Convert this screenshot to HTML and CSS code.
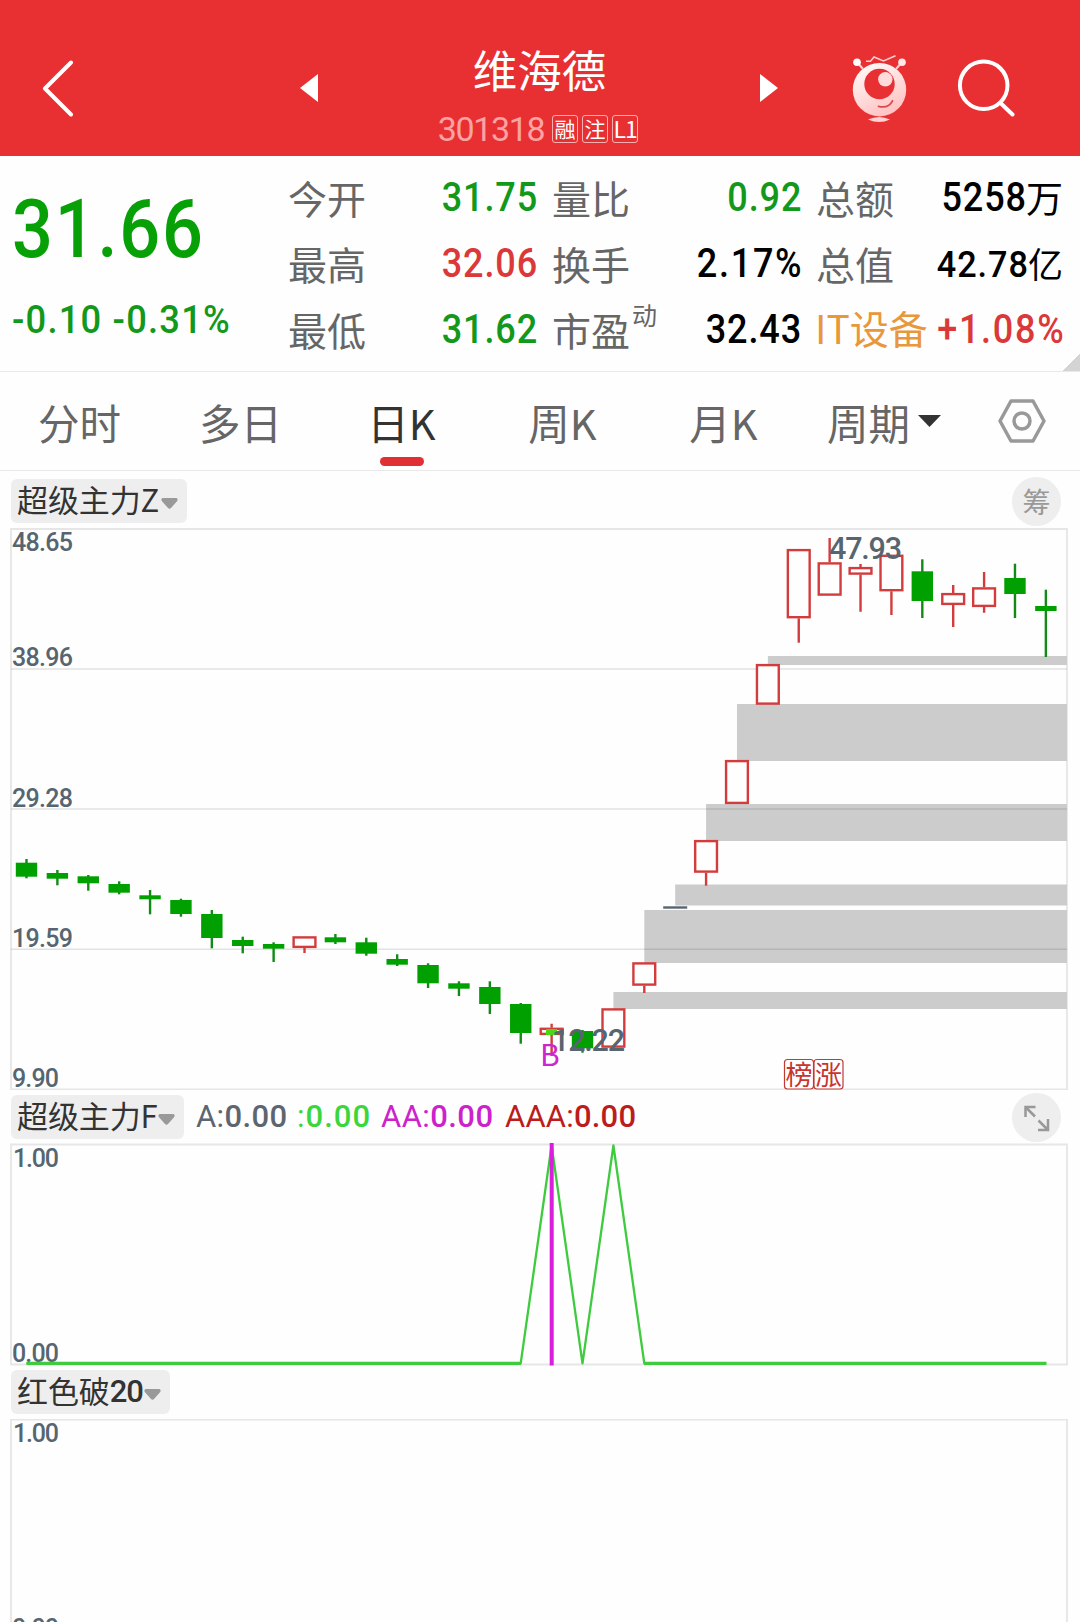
FILE: index.html
```html
<!DOCTYPE html>
<html lang="zh-CN">
<head>
<meta charset="utf-8">
<title>维海德 301318</title>
<link rel="stylesheet" href="styles.css">
</head>
<body>
<header class="header">
  <svg class="back" width="32" height="58" viewBox="42 60 32 58"><path d="M71 62.500 45 88.500 71 114.500"/></svg>
  <svg class="prev" width="18" height="28" viewBox="0 0 18 28"><path d="M18 0V28L0 14z"/></svg>
  <div class="title">
    <h1>维海德</h1>
    <div class="sub"><span class="code">301318</span><span class="tag">融</span><span class="tag">注</span><span class="tag tag-l">L1</span></div>
  </div>
  <svg class="next" width="18" height="28" viewBox="0 0 18 28"><path d="M0 0V28L18 14z"/></svg>
  <svg class="robot" width="58" height="72" viewBox="850 53 58 72">
    <defs><linearGradient id="skin" x1="0" y1="0" x2=".5" y2="1"><stop offset="0" stop-color="#fff"/><stop offset="1" stop-color="#ffc4c4"/></linearGradient></defs>
    <path class="hair" d="M866 61.200h4.500l3.500-4.200 9.500 4 12-5.300"/>
    <path class="stalk" d="M857 62l6 7M902 62l-6 7"/>
    <circle cx="857" cy="62.300" r="3.800" fill="#fff"/><circle cx="902" cy="62.300" r="3.800" fill="#ffe8e8"/>
    <circle cx="879.500" cy="89.700" r="26.700" fill="url(#skin)"/>
    <circle cx="879.500" cy="84" r="15.200" fill="#e83032"/>
    <circle cx="885.300" cy="79.300" r="7.200" fill="#ffdada"/>
    <path class="smile" d="M878.500 106.300q10 2.500 14-5.500"/>
    <path d="M868 119.500q11-5 22 0-11 5-22 0z" fill="#ffd0d0"/>
  </svg>
  <svg class="search" width="58" height="58" viewBox="957 59 58 58"><circle cx="983.700" cy="85.300" r="23.800"/><path d="M1000.500 103l12 11.500"/></svg>
</header>

<section class="quote">
  <div class="price">
    <div class="last"><span class="num">31.66</span></div>
    <div class="change"><span class="num">-0.10 -0.31%</span></div>
  </div>
  <dl class="stats">
    <dt>今开</dt><dd class="down"><span class="num">31.75</span></dd>
    <dt>量比</dt><dd class="down"><span class="num">0.92</span></dd>
    <dt>总额</dt><dd><span class="num">5258</span><span class="unit">万</span></dd>
    <dt>最高</dt><dd class="up"><span class="num">32.06</span></dd>
    <dt>换手</dt><dd><span class="num pct">2.17%</span></dd>
    <dt>总值</dt><dd class="small"><span class="num">42.78</span><span class="unit">亿</span></dd>
    <dt>最低</dt><dd class="down"><span class="num">31.62</span></dd>
    <dt>市盈<sup>动</sup></dt><dd><span class="num">32.43</span></dd>
    <dt class="sector">IT设备</dt><dd class="up"><span class="num pct">+1.08%</span></dd>
  </dl>
  <i class="corner"></i>
</section>

<nav class="tabs">
  <a>分时</a><a>多日</a><a class="active">日K</a><a>周K</a><a>月K</a>
  <a class="period">周期<svg width="23" height="12" viewBox="0 0 23 12"><path d="M0 0H23L11.500 12z" fill="#333"/></svg></a>
  <svg class="settings" width="50" height="46" viewBox="0 0 50 46"><path d="M14 3h22L47 23l-11 20h-22L3 23z"/><circle cx="25" cy="23" r="8"/></svg>
</nav>

<div class="bar bar-first">
  <button class="chip">超级主力Z<svg width="17" height="11" viewBox="0 0 17 11"><path d="M1.500 0h14q2 1.500 .5 3.200L10 10q-1.500 1.500-3 0L1 3.200Q-.5 1.500 1.500 0z"/></svg></button>
  <button class="round">筹</button>
</div>
<svg class="chart" id="kline" width="1080" height="562" viewBox="0 528 1080 562">
  <g class="frame"><path d="M11 529H1067V1089.500H11z"/></g>
  <g id="gaps"></g>
  <path class="grid" d="M11 669H1067M11 809H1067M11 949.300H1067"/>
  <g id="candles"></g>
  <rect x="546" y="1029" width="11" height="6" fill="#4cd810"/>
  <g class="axis">
    <text x="12" y="551" textLength="61">48.65</text>
    <text x="12" y="666" textLength="61">38.96</text>
    <text x="12" y="807" textLength="61">29.28</text>
    <text x="12" y="947" textLength="61">19.59</text>
    <text x="12" y="1087" textLength="47">9.90</text>
  </g>
  <text class="signal" x="540" y="1066">B</text>
  <g class="extreme">
    <text x="829" y="559" textLength="73">47.93</text>
    <text x="552" y="1051" textLength="73">12.22</text>
  </g>
  <g class="mark">
    <rect x="784.500" y="1059.500" width="29" height="29.500" rx="3"/><rect x="814" y="1059.500" width="29" height="29.500" rx="3"/>
    <text x="785.500" y="1084.500">榜</text><text x="815" y="1084.500">涨</text>
  </g>
</svg>

<div class="bar bar-second">
  <button class="chip">超级主力F<svg width="17" height="11" viewBox="0 0 17 11"><path d="M1.500 0h14q2 1.500 .5 3.200L10 10q-1.500 1.500-3 0L1 3.200Q-.5 1.500 1.500 0z"/></svg></button>
  <svg class="legend" width="460" height="44" viewBox="190 1095 460 44">
    <text x="196" y="1127" textLength="91" fill="#5d6670">A:<tspan>0.00</tspan></text>
    <text x="297" y="1127" textLength="73" fill="#3bd63b">:<tspan>0.00</tspan></text>
    <text x="381" y="1127" textLength="112" fill="#cc22cc">AA:<tspan>0.00</tspan></text>
    <text x="505" y="1127" textLength="131" fill="#bc1c1c">AAA:<tspan>0.00</tspan></text>
  </svg>
  <button class="round"><svg width="30" height="30" viewBox="1022 1102 30 30"><path d="M1025.500 1116V1106H1035.500M1026 1106.500 1035 1115.500M1048 1118V1129H1038M1047.500 1128.500 1038.500 1119.500"/></svg></button>
</div>
<svg class="chart" width="1080" height="223" viewBox="0 1143 1080 223">
  <g class="frame"><path d="M11 1144.500H1067V1364.500H11z"/></g>
  <g class="axis"><text x="13" y="1167" textLength="46">1.00</text><text x="12" y="1361.500" textLength="47">0.00</text></g>
  <path class="line" d="M26.500 1363.300H520.700L551.600 1145.500 582.500 1363.300 613.400 1145.500 644.300 1363.300H1046"/>
  <path class="line base" d="M26.500 1363.300H521M644 1363.300H1046.500"/>
  <path d="M551.700 1143V1365.500" stroke="#d81fdc" stroke-width="4"/>
</svg>

<div class="bar bar-third">
  <button class="chip">红色破<b>20</b><svg width="17" height="11" viewBox="0 0 17 11"><path d="M1.500 0h14q2 1.500 .5 3.200L10 10q-1.500 1.500-3 0L1 3.200Q-.5 1.500 1.500 0z"/></svg></button>
</div>
<svg class="chart" width="1080" height="203" viewBox="0 1419 1080 203">
  <g class="frame"><path d="M11 1640V1419.700H1067V1640"/></g>
  <g class="axis"><text x="13" y="1442" textLength="46">1.00</text><text x="12" y="1637" textLength="47">0.00</text></g>
</svg>
<script src="chart.js"></script>
</body>
</html>
```
FILE: styles.css
```css
* { box-sizing: border-box; margin: 0; padding: 0; }
body { width: 1080px; height: 1622px; overflow: hidden; background: #fefefe; color: #000; font-family: "Noto Sans CJK SC", sans-serif; }
svg { display: block; flex: none; }
button { border: 0; font: inherit; }

.header { height: 156px; background: #e83032; display: flex; align-items: flex-start; }
.header > svg { fill: #fff; }
.header .back { margin: 60px 0 0 42px; fill: none; stroke: #fff; stroke-width: 4; stroke-linecap: round; stroke-linejoin: round; }
.header .prev { margin: 74px 0 0 226px; }
.header .next { margin: 74px 0 0; }
.header .robot { margin: 53px 0 0 72px; }
.header .search { margin: 59px 0 0 49px; fill: none; stroke: #fff; stroke-width: 4; stroke-linecap: round; }
.robot .hair, .robot .stalk { fill: none; stroke: #ffd0d0; stroke-width: 1.5; }
.robot .stalk { stroke-width: 2; }
.robot .smile { fill: none; stroke: #d94a4c; stroke-width: 1.8; stroke-linecap: round; }
.title { width: 442px; padding: 42px 0 0 1px; display: flex; flex-direction: column; align-items: center; color: #fff; }
.title h1 { font-size: 44.500px; line-height: 54px; font-weight: 400; }
.sub { display: flex; align-items: center; height: 28px; margin: 19px 3px 0 0; gap: 3.500px; }
.code { font: 400 34px/28px Roboto, sans-serif; color: #f9a3a3; letter-spacing: -1.350px; margin-right: 4px; }
.tag { width: 26.500px; height: 28px; border: 1.500px solid #f9b0b0; border-radius: 3px; font-size: 21px; line-height: 25px; display: flex; justify-content: center; }
.tag-l { font-size: 23px; letter-spacing: -1px; }

.quote { position: relative; height: 216px; border-bottom: 1.500px solid #e8e8e8; display: flex; }
.num { display: inline-block; font-family: Roboto, sans-serif; font-weight: 500; letter-spacing: 1px; margin-right: -1px; transform: scaleX(.9); transform-origin: right; }
.num.pct { letter-spacing: 1.900px; margin-right: -2px; }
.price { width: 288px; padding-left: 12px; color: #07a007; }
.price .num { transform-origin: left; white-space: nowrap; }
.last { font-size: 81px; line-height: 80px; margin-top: 26px; }
.last .num { transform: scaleX(.89); letter-spacing: 2px; }
.change { font-size: 39.500px; line-height: 44px; margin-top: 24px; color: #12981a; }
.change .num { transform: scaleX(.92); letter-spacing: 1.300px; }
.stats { display: grid; grid-template-columns: 130px 119px 15px 110px 139px 15px 110px 137px; grid-auto-rows: 66px; padding-top: 9px; }
.stats dt { font-size: 39px; line-height: 65px; color: #666; white-space: nowrap; }
.stats dd { font-size: 40px; line-height: 66px; display: flex; justify-content: flex-end; white-space: nowrap; }
.stats dt:nth-of-type(3n+1) { grid-column: 1; }
.stats dt:nth-of-type(3n+2) { grid-column: 4; }
.stats dt:nth-of-type(3n) { grid-column: 7; }
.stats sup { font-size: 25px; line-height: 1; vertical-align: 21px; margin-left: 2px; }
.stats .sector { color: #e8973c; line-height: 60px; margin-left: -1px; }
.unit { font-size: 37px; line-height: 64px; }
.small .num { font-size: 36px; line-height: 69px; transform: scaleX(.95); }
.small .unit { font-size: 35px; line-height: 64px; }
.down { color: #12981a; }
.up { color: #db3939; }
.corner { position: absolute; right: 0; bottom: 0; width: 17px; height: 17px; background: linear-gradient(135deg, transparent 50%, #d4d4d4 50%); }

.tabs { height: 99px; border-bottom: 1.500px solid #e8e8e8; display: flex; }
.tabs a { position: relative; width: 161px; padding-right: 2px; text-align: center; font-size: 41.500px; line-height: 101px; color: #666; }
.tabs a.active { color: #333; }
.tabs a.active::after { content: ""; position: absolute; left: 58px; bottom: 4px; width: 44px; height: 9px; border-radius: 5px; background: #e03033; }
.tabs .period { width: 137px; margin-left: 22px; padding: 0; text-align: left; display: flex; gap: 8px; }
.period svg { margin-top: 43px; }
.settings { margin: 26px 0 0 33px; fill: none; stroke: #999; stroke-width: 3.500; stroke-linejoin: round; }

.bar { display: flex; align-items: flex-start; padding: 0 19px 0 11px; }
.bar-first { height: 57px; padding-top: 8px; }
.bar-second { height: 53px; padding-top: 5px; }
.bar-third { height: 53px; padding-top: 4px; }
.chip { height: 44px; padding: 0 9px 0 6px; border-radius: 6px; background: #eee; color: #333; font-size: 31px; line-height: 39px; display: flex; letter-spacing: -.100px; gap: 2px; white-space: nowrap; }
.bar-second .chip { width: 173px; gap: 0; }
.bar-third .chip { width: 159px; gap: 1px; }
.chip b { font: 500 31px/43px Roboto, sans-serif; letter-spacing: -1px; margin-left: -1px; }
.chip svg { fill: #999; margin-top: 19px; }
.round { width: 49px; height: 49px; margin: -2px 0 0 auto; border-radius: 50%; background: #eee; color: #999; font-size: 28px; line-height: 51px; display: flex; align-items: center; justify-content: center; }
.round svg { fill: none; stroke: #999; stroke-width: 2.500; }
.legend { margin-left: 6px; font: 400 31px Roboto, sans-serif; }
.legend tspan { font-weight: 500; }

.frame path { fill: none; stroke: #e6e6e6; stroke-width: 1.800; }
.grid { stroke: rgba(0, 0, 0, .11); stroke-width: 1.500; }
.axis { font: 500 25px Roboto, sans-serif; fill: #566570; }
.extreme { font: 500 30.500px Roboto, sans-serif; fill: #566570; }
text { white-space: pre; }
.signal { font-size: 30px; fill: #cf25cf; }
.mark rect { fill: #fff; stroke: #c03a36; stroke-width: 1.200; }
.mark text { font-size: 27px; fill: #c8342f; }
.line { fill: none; stroke: #3ecb3e; stroke-width: 2.300; stroke-linejoin: round; }
.line.base { stroke-width: 3.200; }
.rise rect { fill: #fefefe; stroke: #d23c3c; stroke-width: 2.400; }
.rise path { stroke: #d23c3c; stroke-width: 2.400; }
.fall rect { fill: #00a000; }
.fall path { stroke: #118a16; stroke-width: 2.400; }
.flat path { stroke: #566570; stroke-width: 2.400; }
```
FILE: chart.js
```js
// Each row: kind, body top, body bottom, wick top, wick bottom
const rows = [
  ['fall', 862.7, 876.7, 859, 878.3], ['fall', 873, 878.7, 870, 885.3], ['fall', 876.3, 883.3, 875, 890.7],
  ['fall', 884, 892.7, 881.3, 894.3], ['fall', 895.3, 899.3, 890, 914.3], ['fall', 900, 914, 898.7, 916.7],
  ['fall', 914, 938, 910, 948.3], ['fall', 940, 946, 936.7, 953.3], ['fall', 944, 948.7, 942.3, 962],
  ['rise', 936.3, 948, 936.3, 953], ['fall', 937.3, 942.3, 934, 944], ['fall', 942.3, 953.7, 937.7, 955.7],
  ['fall', 959, 964.7, 954.3, 966], ['fall', 965, 983.3, 963.3, 988], ['fall', 983.3, 988.7, 981.3, 996],
  ['fall', 987, 1004, 981.3, 1014], ['fall', 1004, 1033, 1003, 1043.7], ['rise', 1027.7, 1035, 1023.7, 1056],
  ['fall', 1031, 1048.3, 1030, 1052.7], ['rise', 1008.3, 1047.7, 1008.3, 1047.7], ['rise', 962.3, 985.7, 962.3, 993],
  ['flat', 907.5, 907.5, 0, 0], ['rise', 840, 872.7, 840, 885.7], ['rise', 760, 804, 760, 804],
  ['rise', 664, 704.7, 664, 704.7], ['rise', 549, 618.3, 549, 642.7], ['rise', 562.3, 595.7, 538, 595.7],
  ['rise', 567, 574.7, 564, 611.7], ['rise', 554.7, 591.3, 554.7, 615], ['fall', 571.3, 601, 559.3, 618],
  ['rise', 593, 605, 585, 627], ['rise', 587.3, 607, 572, 612.7], ['fall', 578, 594, 563.7, 618],
  ['fall', 606, 611, 589.7, 657]
];
// Price gaps: candle index, top, bottom
const gaps = [[24, 656, 665], [23, 704, 761], [22, 804, 841], [21, 884.5, 905.5], [20, 910, 963], [19, 992, 1009]];
const center = i => 26.5 + i * 30.89;

document.getElementById('gaps').innerHTML = gaps.map(([i, t, b]) =>
  `<rect x="${center(i)}" y="${t}" width="${1067 - center(i)}" height="${b - t}" fill="#ccc"/>`).join('');

document.getElementById('candles').innerHTML = rows.map(([kind, t, b, h, l], i) => {
  const x = center(i);
  if (kind === 'flat') return `<g class="flat"><path d="M${x - 12} ${t}H${x + 12}"/></g>`;
  if (kind === 'fall') return `<g class="fall"><path d="M${x} ${h}V${l}"/><rect x="${x - 10.7}" y="${t}" width="21.400" height="${b - t}"/></g>`;
  const wicks = (h < t ? `M${x} ${h}V${t}` : '') + (l > b ? `M${x} ${b}V${l}` : '');
  return `<g class="rise"><rect x="${x - 10.9}" y="${t + 1.1}" width="21.800" height="${b - t - 2.2}"/>${wicks ? `<path d="${wicks}"/>` : ''}</g>`;
}).join('');
```
